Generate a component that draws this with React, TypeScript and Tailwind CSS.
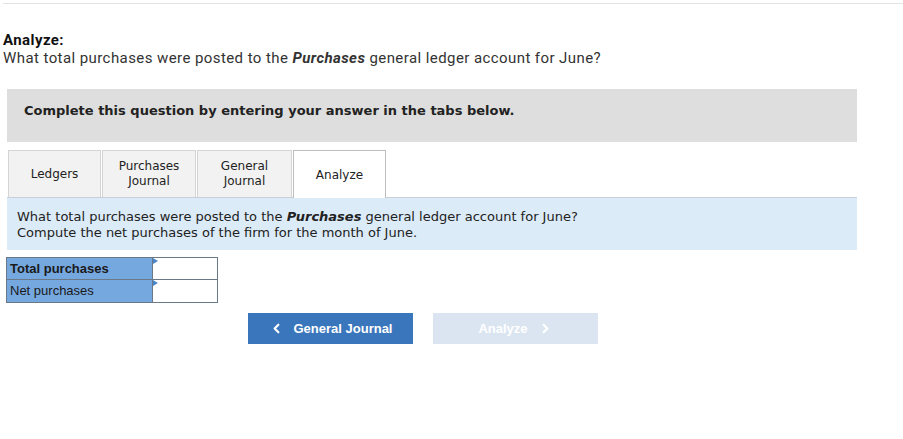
import React from 'react';
import { ChevronLeft, ChevronRight } from 'lucide-react';

const tabs = [
  { label: ['Ledgers'], w: 'w-[93px]' },
  { label: ['Purchases', 'Journal'], w: 'w-[94px]' },
  { label: ['General', 'Journal'], w: 'w-[95px]' },
];

const rows = ['Total purchases', 'Net purchases'];

const App = () => {
  return (
    <div className="w-[903px] h-[439px] bg-white overflow-hidden">
      <div className="pt-[3px] pl-[3px]">
        <div className="h-px bg-[#e3e3e3]"></div>
      </div>

      <div className="pl-[3px] pt-[27px] text-[15px] leading-[18px] text-[#333] font-['Roboto',sans-serif] tracking-[0.42px]">
        <div className="font-bold text-[#111]">Analyze:</div>
        <div>
          What total purchases were posted to the <b><i>Purchases</i></b> general ledger account for June?
        </div>
      </div>

      <div className="ml-[7px] mt-[22px] w-[850px] h-[53px] bg-[#dedede] pl-[17px] pt-[14px] leading-[16px] font-['DejaVu_Sans',sans-serif] text-[13px] font-bold text-[#222]">
        Complete this question by entering your answer in the tabs below.
      </div>

      <div className="ml-[7px] mt-[9px] w-[850px] font-['DejaVu_Sans',sans-serif]">
        <div className="flex items-end h-[47px] gap-[1px] pl-[1px] border-b border-[#c9cfd6]">
          {tabs.map((t) => (
            <div
              key={t.label.join(' ')}
              className={`${t.w} h-[47px] bg-[#f2f2f2] border border-b-0 border-[#d4d4d4] flex flex-col items-center justify-center text-[12px] leading-[15px] text-[#222]`}
            >
              {t.label.map((l) => (
                <span key={l}>{l}</span>
              ))}
            </div>
          ))}
          <div className="w-[93px] h-[48px] -mb-px bg-white border border-b-0 border-[#bdbdbd] flex items-center justify-center text-[12px] text-[#222]">
            Analyze
          </div>
        </div>
        <div className="h-[52px] bg-[#dcebf8] pl-[10px] pt-[11px] text-[13px] leading-[16px] text-[#222]">
          <div>
            What total purchases were posted to the <b><i>Purchases</i></b> general ledger account for June?
          </div>
          <div>Compute the net purchases of the firm for the month of June.</div>
        </div>
      </div>

      <div className="ml-[6px] mt-[7px] w-[212px] border border-[#6b7888] font-['Liberation_Sans',sans-serif] text-[13px]">
        {rows.map((r, i) => (
          <div key={r} className={`flex h-[22px] ${i === 0 ? 'border-b border-[#6b7888]' : ''}`}>
            <div className={`w-[145px] bg-[#76a8e0] pl-[3px] flex items-center text-[#1a1a1a] ${i === 0 ? 'font-bold' : ''}`}>
              {r}
            </div>
            <div className="relative flex-1 bg-white border-l border-[#6b7888]">
              <div className="absolute left-0 top-0 w-0 h-0 border-t-[3px] border-b-[3px] border-l-[5px] border-t-transparent border-b-transparent border-l-[#4a86c8]"></div>
            </div>
          </div>
        ))}
      </div>

      <div className="flex gap-[20px] ml-[248px] mt-[10px] font-['Liberation_Sans',sans-serif] text-[13px] font-bold">
        <div className="w-[165px] h-[31px] bg-[#3a76bb] text-white flex items-center justify-center gap-[10px]">
          <ChevronLeft size={15} strokeWidth={3.5} />
          <span>General Journal</span>
        </div>
        <div className="w-[165px] h-[31px] bg-[#dbe5f1] text-white flex items-center justify-center gap-[10px]">
          <span>Analyze</span>
          <ChevronRight size={15} strokeWidth={3.5} />
        </div>
      </div>
    </div>
  );
};

export default App;
